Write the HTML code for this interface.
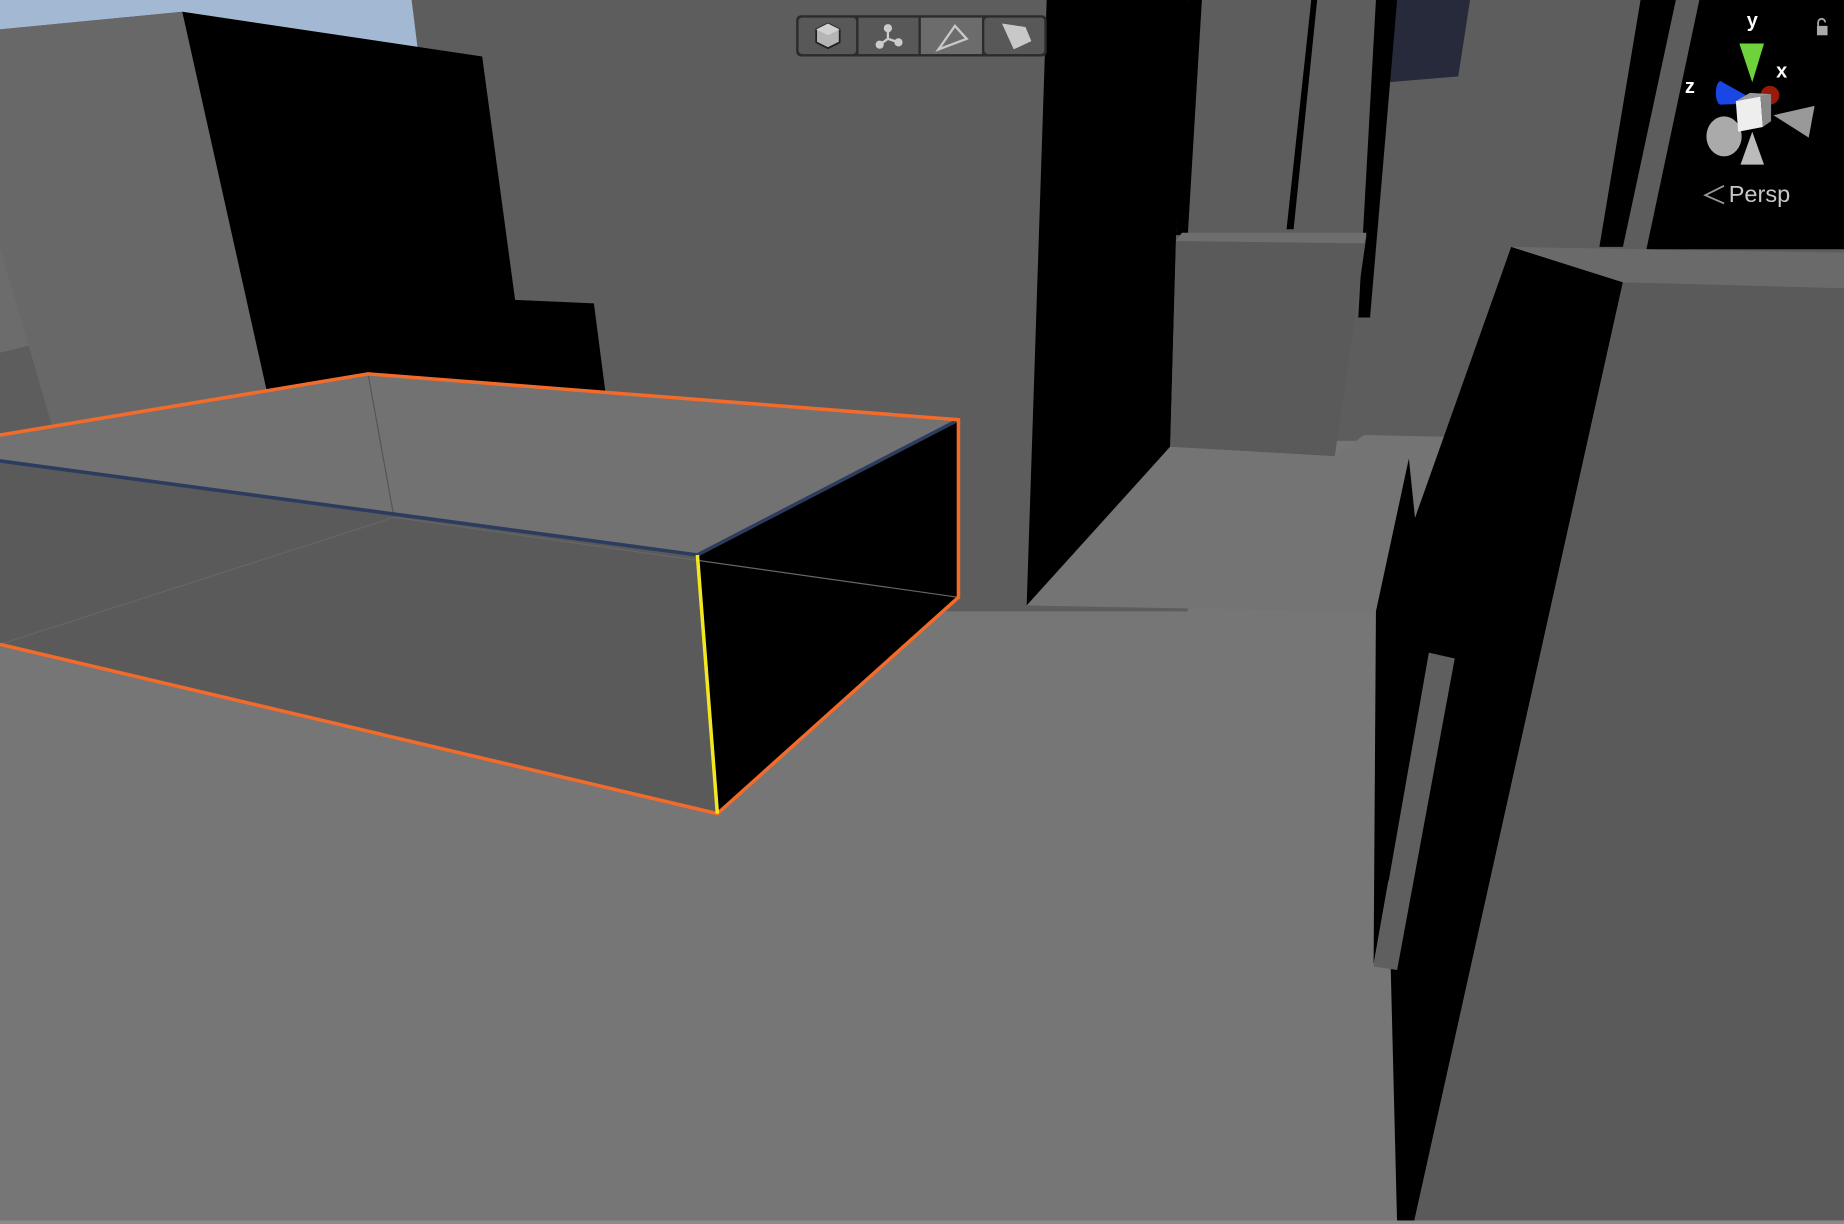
<!DOCTYPE html>
<html><head><style>html,body{margin:0;padding:0;background:#767676;overflow:hidden}svg{display:block}</style></head><body>
<svg width="1844" height="1224" viewBox="0 0 1568 1041" preserveAspectRatio="none" xmlns="http://www.w3.org/2000/svg">
<rect width="1568" height="1041" fill="#767676"/>
<rect x="0" y="0" width="1010" height="520" fill="#5d5d5d"/>
<polygon points="0,0 350,0 355,40 155,10 0,25" fill="#a3b8d3"/>
<polygon points="0,25 0,300 40,290 0,210" fill="#6c6c6c"/>
<polygon points="0,25 155,10 243,405 45,365 0,210" fill="#686868"/>
<polygon points="155,10 410,48 438,255 505,258 515,335 243,405" fill="#000"/>
<polygon points="890,0 1012,0 1000,200 995,380 873,515" fill="#000"/>
<rect x="1010" y="0" width="558" height="215" fill="#5d5d5d"/>
<polygon points="1135,200 1290,200 1260,375 1135,375" fill="#5d5d5d"/>
<polygon points="1185,0 1250,0 1240,65 1180,70" fill="#262a3a"/>
<polygon points="1010,0 1022,0 1010,200 1000,200" fill="#000"/>
<polygon points="1115,0 1120,0 1100,195 1094,195" fill="#000"/>
<polygon points="1170,0 1188,0 1165,270 1155,270" fill="#000"/>
<polygon points="1395,0 1425,0 1380,210 1360,210" fill="#000"/>
<polygon points="1445,0 1568,0 1568,212 1400,212" fill="#000"/>
<polygon points="1000,205 1162,200 1135,388 995,380" fill="#5a5a5a"/>
<polygon points="1005,198 1162,198 1160,207 1000,205" fill="#6e6e6e"/>
<polygon points="995,380 1135,388 1160,370 1260,372 1250,520 1150,520 873,515" fill="#747474"/>
<polygon points="1285,210 1380,240 1202,1041 1188,1041 1175,520" fill="#000"/>
<polygon points="1380,240 1568,245 1568,1041 1202,1041" fill="#5a5a5a"/>
<polygon points="1285,210 1568,215 1568,245 1380,240" fill="#6a6a6a"/>
<polygon points="1170,520 1198,390 1215,555 1168,820" fill="#000"/>
<polygon points="1215,555 1237,560 1188,825 1168,822" fill="#5f5f5f"/>
<polygon points="0,370 313,318 815,357 593,472 0,392" fill="#727272"/>
<polygon points="0,392 593,472 610,692 0,548" fill="#5a5a5a"/>
<polygon points="593,472 815,357 815,508 610,692" fill="#000"/>
<polyline points="0,548 335,440 815,508" fill="none" stroke="#666" stroke-width="1"/>
<line x1="313" y1="318" x2="335" y2="440" stroke="#555" stroke-width="1"/>
<polyline points="0,392 593,472 815,357" fill="none" stroke="#2b3c5e" stroke-width="3"/>
<polyline points="0,370 313,318 815,357 815,508 610,692 0,548" fill="none" stroke="#f26b2a" stroke-width="3"/>
<line x1="593" y1="472" x2="610" y2="692" stroke="#f3e81f" stroke-width="3"/>
<rect x="677" y="13" width="213" height="35" rx="4" fill="#2b2b2b"/>
<rect x="679" y="15" width="49" height="31" rx="3" fill="#585858"/>
<rect x="730" y="15" width="51" height="31" fill="#585858"/>
<rect x="783" y="15" width="52" height="31" fill="#6c6c6c"/>
<rect x="837" y="15" width="51" height="31" rx="3" fill="#585858"/>
<polygon points="704,20 714,25 714,36 704,41 694,36 694,25" fill="#b5b5b5" stroke="#222" stroke-width="1.5"/>
<polygon points="694,25 704,30 714,25 704,20" fill="#d0d0d0"/>
<line x1="755" y1="24" x2="755" y2="33" stroke="#ccc" stroke-width="2"/>
<line x1="755" y1="33" x2="764" y2="36" stroke="#ccc" stroke-width="2"/>
<line x1="755" y1="33" x2="748" y2="38" stroke="#ccc" stroke-width="2"/>
<circle cx="755" cy="24" r="3.5" fill="#ccc"/><circle cx="748" cy="38" r="3.5" fill="#ccc"/><circle cx="764" cy="36" r="3.5" fill="#ccc"/>
<polygon points="812,22 822,33 798,42" fill="none" stroke="#c8c8c8" stroke-width="2"/>
<polygon points="852,20 872,23 877,35 862,42" fill="#c8c8c8"/>
<rect x="1545" y="22" width="9" height="8" fill="#aaa"/>
<path d="M1546,22 v-3 a3,3 0 0 1 6,0" fill="none" stroke="#aaa" stroke-width="1.5"/>
<text x="1490" y="23" font-family="Liberation Sans, sans-serif" font-size="17" font-weight="bold" fill="#fff" text-anchor="middle">y</text>
<polygon points="1479,37 1500,37 1490,70" fill="#6ed23c"/>
<circle cx="1505" cy="81" r="8" fill="#9a1a0a"/>
<text x="1515" y="66" font-family="Liberation Sans, sans-serif" font-size="17" font-weight="bold" fill="#fff" text-anchor="middle">x</text>
<text x="1437" y="79" font-family="Liberation Sans, sans-serif" font-size="17" font-weight="bold" fill="#fff" text-anchor="middle">z</text>
<polygon points="1466,80 1486,92 1490,83" fill="#1a46e6" opacity="0"/>
<polygon points="1466,79 1488,94 1468,72 1488,92" fill="#1a46e6"/>
<polygon points="1463,69 1463,89 1490,88 1490,84" fill="#1a46e6"/>
<ellipse cx="1463" cy="79" rx="4" ry="10" fill="#1a46e6"/>
<polygon points="1508,98 1543,90 1538,117" fill="#999"/>
<ellipse cx="1466" cy="116" rx="15" ry="17" fill="#aaa"/>
<polygon points="1480,140 1500,140 1490,112" fill="#bbb"/>
<polygon points="1476,86 1497,82 1499,108 1478,112" fill="#eee"/>
<polygon points="1476,86 1488,79 1506,80 1497,82" fill="#999"/>
<polygon points="1497,82 1506,80 1506,103 1499,108" fill="#888"/>
<text x="1470" y="172" font-family="Liberation Sans, sans-serif" font-size="20" fill="#c8c8c8">Persp</text>
<polyline points="1466,158 1450,166 1466,173" fill="none" stroke="#999" stroke-width="1.5"/>
<rect x="0" y="1038" width="1568" height="3" fill="#8a8a8a"/>
</svg>
</body></html>
